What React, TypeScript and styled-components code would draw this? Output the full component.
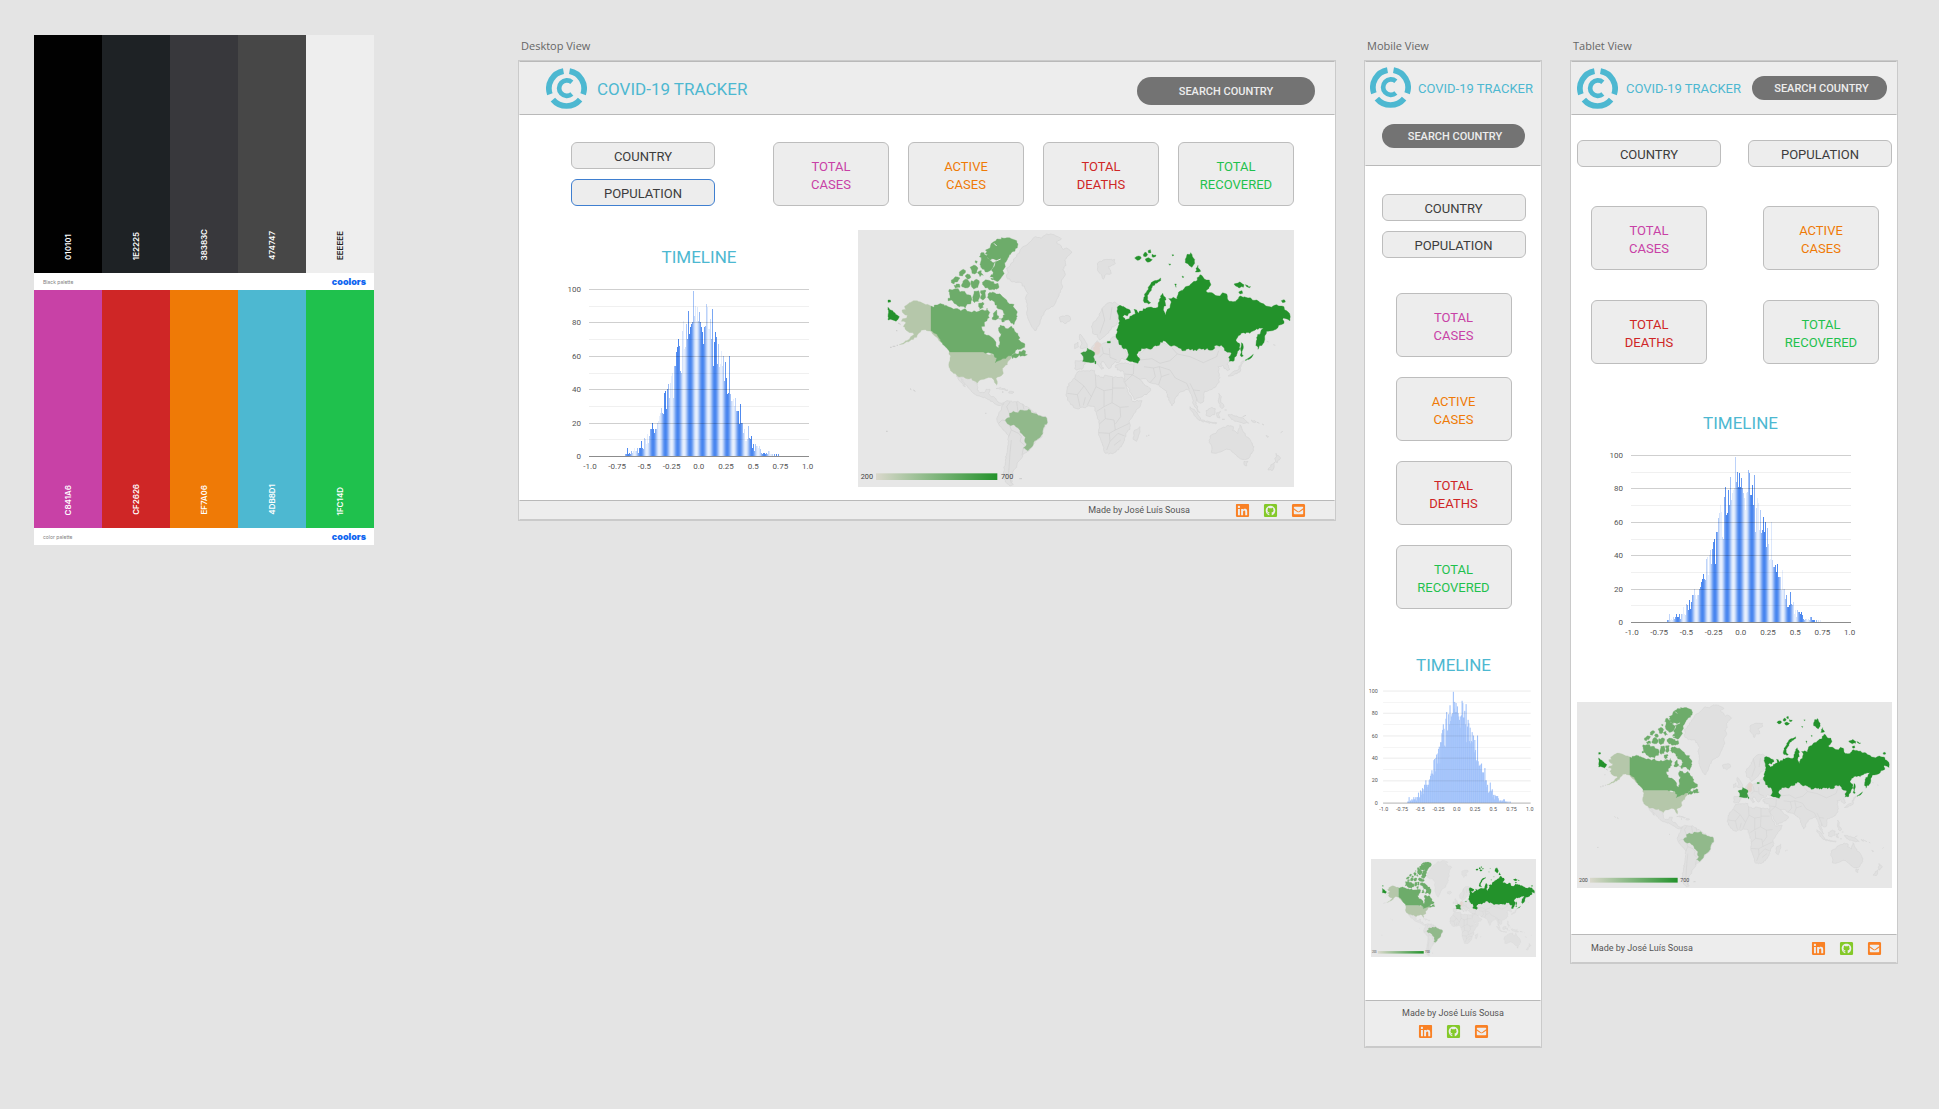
import React from "react";
import styled, { createGlobalStyle } from "styled-components";
import { FaEnvelopeSquare, FaGithubSquare, FaLinkedin } from "react-icons/fa";

type View = "desktop" | "mobile" | "tablet";

const color = {
  canvas: "#e4e4e4",
  panel: "#ededed",
  line: "#b9b9b9",
  edge: "#cacaca",
  teal: "#4db8d1",
  pink: "#c841a6",
  red: "#cf2626",
  orange: "#ef7a06",
  green: "#1fc14d",
};

const GlobalStyle = createGlobalStyle`
  * { box-sizing: border-box; }
  body {
    margin: 0;
    background: ${color.canvas};
    font-family: Roboto, "Liberation Sans", sans-serif;
  }
  h2, h3, p, figure { margin: 0; font-weight: 400; }
`;

/* ---------- canvas ---------- */

const Canvas = styled.main`
  display: flex;
  align-items: flex-start;
  gap: 144px;
  min-height: 100vh;
  padding: 35px 41px 35px 34px;
`;

const Boards = styled.div`
  flex: 1;
  min-width: 0;
  display: grid;
  grid-template-columns: 818fr 178fr 328fr;
  align-items: start;
  gap: 28px;
`;

const BoardLabel = styled.h2`
  height: 25px;
  padding-left: 3px;
  font: 400 11px/22px "Open Sans", "Noto Sans", sans-serif;
  color: #666;
`;

const Board = styled.section`
  border: 1px solid ${color.edge};
  background: #fff;
`;

/* ---------- palettes ---------- */

const Palettes = styled.aside`
  flex: 0 0 340px;
`;

const Swatches = styled.div`
  display: grid;
  grid-template-columns: repeat(5, 1fr);
  height: 238px;
`;

const Swatch = styled.div<{ $fill: string; $dark?: boolean }>`
  display: flex;
  align-items: flex-end;
  justify-content: center;
  padding-bottom: 13px;
  background: ${(p) => p.$fill};
  color: ${(p) => (p.$dark ? "#222" : "#fff")};
`;

const Code = styled.span`
  writing-mode: vertical-rl;
  transform: rotate(180deg);
  font: 600 8px/10px Inter, sans-serif;
`;

const PaletteFooter = styled.div`
  display: flex;
  align-items: center;
  justify-content: space-between;
  height: 17px;
  padding: 0 8px 0 9px;
  background: #fff;
`;

const PaletteName = styled.span`
  font: 400 5px/8px Inter, sans-serif;
  color: #808080;
`;

const Coolors = styled.span`
  font: 900 9px/12px Inter, sans-serif;
  color: #0f66f0;
`;

const palettes = [
  { name: "Black palette", codes: ["010101", "1E2225", "38383C", "474747", "EEEEEE"] },
  { name: "color palette", codes: ["C841A6", "CF2626", "EF7A06", "4DB8D1", "1FC14D"] },
];

/* ---------- header ---------- */

const headerPadding = { desktop: "0 19px 0 26px", mobile: "5px 4px 17px 4px", tablet: "0 9px 0 5px" };
const brandGap = { desktop: 10, mobile: 7, tablet: 8 };

const Header = styled.header<{ $view: View }>`
  display: flex;
  flex-direction: ${(p) => (p.$view === "mobile" ? "column" : "row")};
  align-items: center;
  justify-content: space-between;
  gap: ${(p) => (p.$view === "mobile" ? "16px" : "0")};
  min-height: 54px;
  padding: ${(p) => headerPadding[p.$view]};
  border: 1px solid;
  border-color: ${color.line} transparent;
  background: ${color.panel};
`;

const Brand = styled.div<{ $view: View }>`
  display: flex;
  align-items: center;
  align-self: ${(p) => (p.$view === "mobile" ? "flex-start" : "auto")};
  gap: ${(p) => brandGap[p.$view]}px;
  font-size: ${(p) => (p.$view === "desktop" ? "17px" : "13px")};
  line-height: 20px;
  white-space: nowrap;
  color: ${color.teal};
`;

const BrandName = styled.span`
  padding-top: 2px;
`;

const LogoSvg = styled.svg`
  display: block;
  width: 41px;
  height: 41px;
`;

const SearchForm = styled.form<{ $view: View }>`
  width: ${(p) => ({ desktop: 178, mobile: 143, tablet: 135 })[p.$view]}px;
  padding-top: ${(p) => (p.$view === "desktop" ? "6px" : "0")};
`;

const SearchInput = styled.input<{ $view: View }>`
  display: block;
  width: 100%;
  height: ${(p) => (p.$view === "desktop" ? "28px" : "24px")};
  padding: ${(p) => (p.$view === "desktop" ? "0 8px" : "0 8px 0 12px")};
  border: 0;
  border-radius: 14px;
  background: #737373;
  font: 500 11px/16px Roboto, sans-serif;
  text-align: center;
  color: #ededed;
  &::placeholder { color: #ededed; opacity: 1; }
`;

const Logo = () => (
  <LogoSvg viewBox="0 0 122 122" fill="none" stroke={color.teal} aria-hidden="true">
    <path strokeWidth="17" d="M52 9.300A52.500 52.500 0 0 0 11.500 78" />
    <path strokeWidth="17" d="M70 9.300A52.500 52.500 0 0 1 110.500 78" />
    <path strokeWidth="17" d="M20.500 94A52.500 52.500 0 0 0 101.500 94" />
    <path strokeWidth="14" d="M77 42.500A23 23 0 1 0 77 77.500" />
  </LogoSvg>
);

/* ---------- controls and totals ---------- */

const Controls = styled.div<{ $row?: boolean }>`
  display: flex;
  flex-direction: ${(p) => (p.$row ? "row" : "column")};
  justify-content: space-between;
  align-self: ${(p) => (p.$row ? "stretch" : "auto")};
  gap: 10px;
`;

const Choice = styled.button<{ $active?: boolean }>`
  width: 144px;
  height: 27px;
  padding: 3px 0 0;
  border: 1px solid ${(p) => (p.$active ? "#3f7fd0" : "#bdbdbd")};
  border-radius: 6px;
  background: ${color.panel};
  font: 400 13px/18px Roboto, sans-serif;
  color: #3c3c3c;
`;

const Totals = styled.div<{ $view: View }>`
  flex: ${(p) => (p.$view === "tablet" ? "1" : "0 1 auto")};
  display: grid;
  grid-template-columns: repeat(${(p) => ({ desktop: 4, mobile: 1, tablet: 2 })[p.$view]}, 116px);
  justify-content: space-between;
  gap: ${(p) => ({ desktop: "19px", mobile: "20px", tablet: "30px" })[p.$view]};
  padding: ${(p) => (p.$view === "tablet" ? "0 13px 0 14px" : "0")};
`;

const Total = styled.div<{ $tone: string }>`
  display: flex;
  flex-direction: column;
  align-items: center;
  justify-content: center;
  height: 64px;
  padding-top: 3px;
  border: 1px solid #bdbdbd;
  border-radius: 6px;
  background: ${color.panel};
  font-size: 13px;
  line-height: 18px;
  color: ${(p) => p.$tone};
`;

const totals: [string, string, string][] = [
  ["TOTAL", "CASES", color.pink],
  ["ACTIVE", "CASES", color.orange],
  ["TOTAL", "DEATHS", color.red],
  ["TOTAL", "RECOVERED", color.green],
];

/* ---------- body layouts ---------- */

const DesktopBody = styled.div`
  display: grid;
  gap: 24px;
  padding: 27px 41px 13px 52px;
`;

const SplitRow = styled.div`
  display: flex;
  align-items: flex-start;
  justify-content: space-between;
`;

const TimelineSlot = styled.div`
  flex: 0 1 256px;
  padding-top: 15px;
`;

const MapSlot = styled.div`
  flex: 0 1 436px;
`;

const MobileBody = styled.div`
  display: flex;
  flex-direction: column;
  align-items: center;
  padding: 28px 5px 43px 6px;
`;

const TabletBody = styled.div`
  display: flex;
  flex-direction: column;
  align-items: center;
  padding: 25px 5px 46px 6px;
`;

const Section = styled.div<{ $top: number; $inset?: number }>`
  align-self: stretch;
  display: flex;
  justify-content: center;
  margin-top: ${(p) => p.$top}px;
  padding-left: ${(p) => p.$inset || 0}px;
`;

/* ---------- timeline chart ---------- */

const Figure = styled.figure<{ $fluid?: boolean }>`
  width: ${(p) => (p.$fluid ? "100%" : "256px")};
`;

const ChartTitle = styled.h3<{ $fluid?: boolean }>`
  margin-bottom: ${(p) => (p.$fluid ? "9px" : "13px")};
  font-size: 17px;
  line-height: 24px;
  text-align: center;
  color: ${color.teal};
`;

const ChartSvg = styled.svg<{ $fluid?: boolean }>`
  display: block;
  width: calc(100% - ${(p) => (p.$fluid ? 4 : 16)}px);
  overflow: visible;
  font: 8px Roboto, sans-serif;
  fill: #555;
`;

const samples = [
  1, 1, 5, 1, 2, 1, 3, 2, 3, 5, 3, 3, 5, 2, 5, 5, 9, 5, 4, 11, 10, 7, 13, 8, 12, 16, 16, 20, 16, 14, 16, 16, 20, 21,
  24, 26, 29, 26, 25, 38, 39, 28, 40, 43, 35, 44, 48, 50, 35, 54, 54, 62, 65, 70, 66, 51, 50, 75, 81, 64, 65, 79, 70,
  87, 73, 77, 79, 80, 99, 84, 90, 81, 89, 81, 86, 80, 77, 74, 67, 77, 78, 91, 89, 76, 76, 82, 70, 88, 54, 68, 74, 71,
  55, 67, 53, 55, 63, 54, 60, 45, 56, 47, 37, 38, 60, 37, 33, 33, 34, 30, 35, 27, 27, 27, 19, 31, 20, 20, 14, 16, 9, 9,
  10, 18, 11, 10, 12, 5, 7, 3, 7, 6, 6, 5, 6, 4, 2, 1, 2, 2, 1, 2, 1, 3, 3, 1, 1, 1, 0, 1, 0, 1, 0, 1,
];
const FIRST = -74;
const BEAT = 12.36;

const Timeline = ({ phase = 0, fluid }: { phase?: number; fluid?: boolean }) => (
  <Figure $fluid={fluid}>
    <ChartTitle $fluid={fluid}>TIMELINE</ChartTitle>
    <ChartSvg $fluid={fluid} viewBox="0 0 240 190" role="img" aria-label="Timeline">
      <g shapeRendering={fluid ? "auto" : "crispEdges"}>
        {samples.map((v, i) => {
          const x = FIRST + i;
          const wave = 0.5 + 0.5 * Math.cos((2 * Math.PI * (x - phase)) / BEAT);
          return (
            <rect
              key={i}
              x={128 + x}
              y={174 - v * 1.67}
              width={fluid ? 1.6 : 1}
              height={v * 1.67}
              fill={fluid ? "#a1c2fa" : "#4080ee"}
              opacity={fluid ? 1 : 0.12 + 0.84 * wave}
            />
          );
        })}
        {Array.from({ length: 11 }, (_, i) => (
          <rect
            key={i}
            x={18}
            y={Math.round(174 - i * 16.7)}
            width={220}
            height={1}
            fill="#000"
            opacity={i === 0 ? 0.45 : i % 2 ? 0.06 : fluid ? 0.12 : 0.19}
          />
        ))}
      </g>
      {[0, 20, 40, 60, 80, 100].map((v) => (
        <text key={v} x={10} y={177 - v * 1.67} textAnchor="end">
          {v}
        </text>
      ))}
      {["-1.0", "-0.75", "-0.5", "-0.25", "0.0", "0.25", "0.5", "0.75", "1.0"].map((t, i) => (
        <text key={t} x={19 + i * 27.2} y={187} textAnchor="middle">
          {t}
        </text>
      ))}
    </ChartSvg>
  </Figure>
);

/* ---------- world map ---------- */

const MapSvg = styled.svg`
  display: block;
  width: 100%;
  background: #e7e7e7;
  font: 22px Roboto, sans-serif;
  fill: #444;
`;

const noise = (n: number) => {
  const s = Math.sin(n * 12.9898) * 43758.5453;
  return s - Math.floor(s) - 0.5;
};

/* Turns a coarse outline into a ragged coast; long straight borders stay straight. */
const coast = (outline: string, rough: number) => {
  const pts = outline.split(" ").map((p) => p.split(",").map(Number));
  const out: string[] = [];
  pts.forEach(([x, y], i) => {
    const [u, v] = pts[(i + 1) % pts.length];
    out.push(`${x},${y}`);
    const len = Math.hypot(u - x, v - y);
    if (len > 40 && (x === u || y === v)) return;
    const steps = Math.floor(len / 5);
    for (let k = 1; k < steps; k++) {
      const t = k / steps;
      const a = noise(x + y * 3 + k * 7) * rough;
      const b = noise(x * 2 + y + k * 11) * rough;
      out.push(`${(x + (u - x) * t + a).toFixed(1)},${(y + (v - y) * t + b).toFixed(1)}`);
    }
  });
  return out.join(" ");
};

const west = {
  neutral: [
    "540,66 556,50 576,54 590,42 612,44 634,56 620,66 634,78 640,88 650,84 666,96 654,108 644,120 648,136 638,150 646,164 634,184 638,200 632,216 624,232 616,250 608,260 588,268 574,290 568,314 558,332 546,322 536,300 530,276 532,252 526,236 534,220 524,204 512,188 486,186 470,172 474,156 470,144 486,128 500,110 512,88",
    "628,292 638,288 658,288 662,300 648,310 632,306",
    "318,468 340,471 352,477 364,475 374,484 382,492 382,508 390,518 402,518 408,508 420,508 416,520 424,530 436,534 444,546 454,550 462,548 460,556 444,556 432,550 420,540 404,532 388,528 368,518 358,506 344,490 334,476 346,500 340,498 328,482",
    "438,506 452,502 474,510 470,512 454,508",
    "478,514 492,516 488,520 476,519",
    "462,548 472,542 488,546 504,544 518,552 532,560 544,570 560,582 590,592 592,608 582,626 576,650 560,660 548,678 538,692 528,698 518,706 512,718 502,728 500,742 490,752 488,768 482,778 490,794 480,798 466,786 460,760 466,720 472,690 476,650 462,632 446,612 440,596 446,582 454,570 456,556",
    "674,372 684,366 686,380 674,386",
    "690,342 698,352 708,368 712,380 698,386 690,384 696,372 688,358",
    "676,422 704,424 706,432 696,448 680,450 674,446",
  ],
  canada: [
    "243,258 252,262 262,255 275,252 284,258 300,262 312,268 330,270 345,266 352,274 372,272 380,276 392,270 404,272 412,264 418,280 412,296 404,306 396,328 402,342 416,346 428,354 436,364 440,380 446,384 448,362 452,348 446,332 450,316 462,318 474,326 486,320 494,334 504,346 510,362 522,370 524,382 512,388 496,392 486,404 470,412 452,420 436,428 440,414 430,402 412,398 400,396 298,396 284,378 272,364 262,346 250,336 243,332",
    "484,408 494,400 506,402 520,390 532,404 524,408 508,404 498,414 488,416",
    "414,222 428,216 446,222 460,232 470,240 486,252 498,270 502,288 494,306 492,314 480,304 470,300 456,306 446,296 460,292 466,282 452,268 440,262 434,246 420,242 412,232",
    "430,280 440,270 446,288 436,300 426,294",
    "298,208 316,206 330,216 346,218 362,226 366,238 358,252 346,264 326,258 312,250 304,240 294,242 300,228",
    "372,214 386,212 390,228 386,244 374,248 368,232",
    "392,212 408,212 406,226 398,240 392,230",
    "386,250 398,246 400,262 388,268",
    "424,70 440,58 462,55 484,56 500,62 504,72 496,86 484,98 476,112 464,128 466,140 458,152 460,164 450,178 440,184 426,180 420,172 430,158 424,150 434,138 438,120 428,116 418,118 406,102 412,88 420,84",
    "392,100 402,98 412,114 424,124 434,126 430,138 420,152 406,156 398,148 390,134 394,120 388,110",
    "402,184 420,182 444,190 446,204 426,208 406,204 398,194",
    "364,182 380,178 388,188 384,202 368,204",
    "338,186 352,178 360,188 358,200 342,202 334,196",
    "304,180 316,170 330,174 322,186 312,192 304,188",
    "328,156 340,148 346,158 338,168 328,166",
    "360,142 370,136 384,144 380,158 366,160",
    "384,156 394,152 400,166 390,170",
    "345,168 359,164 363,172 351,176",
    "376,122 382,124 380,130 375,127",
    "312,196 328,192 330,202 316,204",
  ],
  usa: [
    "243,258 228,254 212,246 194,242 178,248 164,258 168,268 156,270 160,280 172,286 170,294 158,296 154,304 168,308 160,320 170,332 184,338 192,344 180,354 164,366 148,374 160,372 180,362 200,352 206,340 218,330 230,332 243,334",
    "243,328 258,336 270,350 278,366 274,368 260,352 246,340",
    "298,396 404,396 414,404 424,402 438,410 436,424 450,420 466,412 478,404 484,414 474,424 472,434 462,442 458,452 460,460 448,470 438,476 442,490 440,496 434,488 428,476 412,474 402,478 390,480 382,490 372,482 364,474 352,476 340,470 322,468 310,460 300,446 297,428 300,414",
  ],
  brazil: [
    "478,580 490,574 504,578 510,570 524,572 536,568 544,578 560,582 590,594 592,608 580,624 578,642 568,654 554,662 546,680 534,692 520,684 530,672 524,664 526,652 514,640 506,626 494,616 478,614 466,602 472,594 480,592",
  ],
  france: ["692,400 706,396 712,384 722,390 734,398 730,410 734,422 722,428 708,426 698,424 700,410"],
  russia: ["114,262 130,276 148,290 138,304 122,298 114,300", "114,240 121,240 122,246 114,247"],
};

const east = {
  neutral: [
    "8,340 4,318 14,304 28,288 36,266 52,250 74,246 88,256 82,268 84,300 80,314 66,320 62,330 50,342 38,352 28,360 22,344",
    "0,392 14,372 22,362 30,372 56,366 66,352 76,348 82,358 100,380 112,400 108,420 96,414 86,428 76,424 70,432 56,446 48,436 36,424 30,432 42,444 34,448 18,426 4,422",
    "76,436 100,430 132,432 150,420 148,400 170,384 210,366 250,378 300,392 360,386 396,378 420,396 424,420 410,432 420,448 412,452 398,436 384,440 388,462 388,486 376,502 358,510 344,514 342,530 340,546 328,548 320,536 316,546 322,566 330,578 322,574 312,556 306,530 298,512 288,508 270,516 258,530 252,550 246,558 236,540 230,514 218,506 206,494 180,488 172,480 160,476 150,478 164,494 182,506 178,516 150,532 134,540 124,520 104,486 102,462 98,452 82,450",
    "-70,518 -68,500 -50,476 -38,456 -20,452 4,450 14,452 16,464 40,474 44,466 70,472 98,472 102,486 116,520 128,544 156,542 150,560 130,584 118,602 120,628 108,640 104,660 94,680 78,696 56,702 46,700 38,676 26,640 28,612 20,584 14,560 -10,560 -40,566 -58,554 -70,530",
    "134,630 150,620 150,636 140,664 130,658",
    "358,664 360,648 378,640 392,626 406,622 414,616 430,620 428,632 444,640 450,614 458,632 466,648 482,662 492,680 486,700 474,716 456,718 442,710 430,698 414,688 396,694 378,700 364,698 366,684",
    "462,724 474,724 470,738 464,736",
    "558,700 572,714 562,728 556,720",
    "556,726 546,752 534,750 548,732",
    "300,560 316,574 332,594 330,602 316,590 304,572",
    "332,600 360,606 380,608 378,612 340,606",
    "348,572 366,562 376,566 374,584 360,590 348,586",
    "380,578 392,574 386,584 390,594 382,592",
    "414,584 440,588 462,596 476,610 456,608 440,604 424,598",
    "386,520 394,530 392,548 402,560 396,566 386,548",
    "456,424 464,422 454,436 450,456 430,466 414,468 428,456 444,450",
    "22,130 40,120 74,118 76,130 56,140 64,160 50,162 40,178 30,160 22,148",
    "484,600 498,606 494,608",
    "528,646 536,650 532,652",
  ],
  germany: ["14,372 22,366 32,372 30,392 24,404 14,402 10,388"],
  russia: [
    "82,262 90,256 104,262 120,270 122,278 112,288 104,284 98,290 106,300 118,296 124,288 136,282 132,268 140,270 146,280 160,266 176,262 190,264 204,262 208,238 218,220 226,232 226,250 220,270 228,286 232,268 240,264 244,246 236,236 250,232 262,236 266,216 282,206 300,194 318,184 330,164 344,178 358,180 362,196 348,214 366,218 376,226 390,228 398,218 410,222 414,240 424,244 440,240 452,228 474,234 500,240 516,250 540,260 560,254 576,258 590,272 600,286 600,302 588,296 578,298 582,310 566,316 552,330 530,334 524,350 518,372 504,388 498,374 500,352 512,336 520,324 500,326 480,340 460,338 444,348 438,362 448,370 450,386 440,404 430,424 418,424 416,412 424,400 404,392 394,376 380,376 368,390 340,386 310,392 296,386 276,392 262,380 238,376 226,364 210,366 208,376 190,380 182,388 160,386 146,394 140,404 148,414 144,430 130,426 108,418 116,404 112,390 96,382 86,366 78,352 80,330 88,312 86,296",
    "160,242 168,218 178,198 190,184 212,174 212,182 196,190 184,206 176,222 172,238 182,248 176,252",
    "290,108 302,98 310,114 314,130 306,142 296,134 286,128",
    "318,144 324,136 332,154 316,156",
    "432,192 448,186 462,194 460,202 444,202",
    "466,194 482,200 470,200",
    "446,216 456,212 458,220 450,222",
    "574,242 584,240 586,246 578,248",
    "454,368 460,380 456,394 460,408 454,410 452,390",
    "466,420 490,403 488,407 468,422",
    "52,364 61,364 61,369 52,369",
    "134,114 146,108 154,114 148,120 138,118",
    "160,104 168,97 173,104 168,110 161,109",
    "174,92 181,89 183,98 176,99",
    "166,117 176,113 187,119 180,125 168,123",
    "186,103 198,105 196,110 186,109",
    "276,168 281,170 279,174",
    "254,192 259,192 258,202",
    "246,104 252,105 248,108",
    "236,132 242,132 240,136",
    "14,424 18,424 17,432 15,432",
  ],
};

const borders =
  "M-46 476L-18 498 -38 524M-18 498L4 530 M16 464L18 500 4 530 -8 556M18 500L42 512 42 560M68 472V504L104 504M68 504L66 548 90 562 116 560M42 512L66 508M-68 520L-38 524 -30 560M-20 556L-14 532M66 548L42 560 20 574M44 566L46 596 28 612M46 596L72 600 76 630 118 610M90 562L92 590 76 612M26 638L58 640 60 664 50 690M60 664L84 640 104 648M58 640L76 630M72 676L92 660M104 486L130 462 132 434M104 462L126 464 150 478M162 440L190 444 208 440 240 450M150 420L186 416 210 430 240 422M190 444L196 470 180 488M208 440L214 470 206 494M240 450L256 474 290 490 298 508M214 470L238 462M240 422L262 402 300 410 340 428 380 410 386 392M262 402L246 384M300 490L310 510 330 512M310 510L320 536M36 380L40 400 58 404M40 400L28 412M58 384L60 412 80 420M36 266L44 300 30 340M66 262L60 300";

const southBorders =
  "M478 580L470 560 480 546M500 546L504 576M518 552L522 568M466 602L456 600 446 610M478 614L484 630 476 650M484 630L506 640 514 650M484 660L480 700 476 760 484 790M514 650L510 664 524 676M520 684L516 706";

type ShapeProps = { shapes: string[]; fill: string; stroke?: string; rough?: number };
const Shapes = ({ shapes, fill, stroke, rough = 5 }: ShapeProps) => (
  <g fill={fill} stroke={stroke || fill} strokeWidth={stroke ? 2 : 1}>
    {shapes.map((s) => (
      <polygon key={s} points={coast(s, rough)} />
    ))}
  </g>
);

const WorldMap = ({ id }: { id: string }) => (
  <MapSvg viewBox="0 0 1308 771" role="img" aria-label="Cases by country">
    <defs>
      <linearGradient id={id}>
        <stop offset="0" stopColor="#dad8cc" />
        <stop offset="1" stopColor="#23922b" />
      </linearGradient>
    </defs>
    <g transform="translate(-24 -30)">
      <Shapes shapes={west.neutral} fill="#e0e0e0" stroke="#d4d4d4" />
      <path d={southBorders} fill="none" stroke="#d0d0d0" strokeWidth="2" />
      <Shapes shapes={west.usa} fill="#b5c7aa" />
      <Shapes shapes={west.canada} fill="#6dac6a" rough={8} />
      <Shapes shapes={west.brazil} fill="#91b98b" />
      <Shapes shapes={west.russia} fill="#23922b" />
      <path
        d="M424 118l14 5 14-6M420 172l10 2M432 70l8 8"
        stroke="#e7e7e7"
        strokeWidth="3"
        fill="none"
      />
      <path
        d="M120 382h5M128 379h8M140 376h4M180 506l4 3M190 510l6 4M108 634h5M138 332h4M144 309l8 4M406 580h3M456 516h4M508 776h8"
        stroke="#bdbdbd"
        strokeWidth="2"
      />
    </g>
    <g transform="translate(696 -30)">
      <Shapes shapes={east.neutral} fill="#e0e0e0" stroke="#d4d4d4" />
      <path d={borders} fill="none" stroke="#d0d0d0" strokeWidth="2" />
      <Shapes shapes={east.germany} fill="#e3d5d0" />
      <Shapes shapes={east.russia} fill="#23922b" rough={6} />
      <path
        d="M500 606l8 4M516 612l6 3M572 638l6-4M530 364l6 2M550 374l6 2M168 648h4M174 646h4M404 570h6M396 598h8M458 590l10-4"
        stroke="#cccccc"
        strokeWidth="2"
      />
    </g>
    <g transform="translate(-24 -30)">
      <Shapes shapes={west.france} fill="#3c9a41" />
    </g>
    <rect x="54" y="730" width="364" height="20" fill={`url(#${id})`} />
    <text x="8" y="747">200</text>
    <text x="429" y="747">700</text>
  </MapSvg>
);

/* ---------- footer ---------- */

const footerPadding = { desktop: "0 28px", mobile: "6px 0 7px", tablet: "0 14px 0 19px" };
const footerHeight = { desktop: 20, mobile: 47, tablet: 29 };

const Footer = styled.footer<{ $view: View }>`
  display: flex;
  flex-direction: ${(p) => (p.$view === "mobile" ? "column" : "row")};
  align-items: center;
  justify-content: ${(p) => (p.$view === "desktop" ? "flex-end" : "space-between")};
  gap: ${(p) => (p.$view === "desktop" ? "45px" : "0")};
  height: ${(p) => footerHeight[p.$view]}px;
  padding: ${(p) => footerPadding[p.$view]};
  border: 1px solid;
  border-color: ${color.line} transparent ${color.edge};
  background: ${color.panel};
  font-size: 9px;
  line-height: 12px;
  color: #555;
`;

const Links = styled.nav`
  display: flex;
  gap: 13px;
`;

const IconLink = styled.a<{ $tone: string }>`
  display: block;
  height: 15px;
  font-size: 15px;
  line-height: 0;
  color: ${(p) => p.$tone};
`;

/* ---------- composed parts ---------- */

const TopBar = ({ view }: { view: View }) => (
  <Header $view={view}>
    <Brand $view={view}>
      <Logo />
      <BrandName>COVID-19 TRACKER</BrandName>
    </Brand>
    <SearchForm $view={view}>
      <SearchInput $view={view} type="text" aria-label="Search country" placeholder="SEARCH COUNTRY" />
    </SearchForm>
  </Header>
);

const Choices = ({ row, active }: { row?: boolean; active?: boolean }) => (
  <Controls $row={row}>
    <Choice type="button">COUNTRY</Choice>
    <Choice type="button" $active={active}>
      POPULATION
    </Choice>
  </Controls>
);

const TotalCards = ({ view }: { view: View }) => (
  <Totals $view={view}>
    {totals.map(([first, second, tone]) => (
      <Total key={first + second} $tone={tone}>
        <span>{first}</span>
        <span>{second}</span>
      </Total>
    ))}
  </Totals>
);

const Credits = ({ view }: { view: View }) => (
  <Footer $view={view}>
    <p>Made by José Luís Sousa</p>
    <Links>
      <IconLink href="#linkedin" aria-label="LinkedIn" $tone="#f98125">
        <FaLinkedin />
      </IconLink>
      <IconLink href="#github" aria-label="GitHub" $tone="#84c929">
        <FaGithubSquare />
      </IconLink>
      <IconLink href="#mail" aria-label="Email" $tone="#f98125">
        <FaEnvelopeSquare />
      </IconLink>
    </Links>
  </Footer>
);

export default function App() {
  return (
    <>
      <GlobalStyle />
      <Canvas>
        <Palettes>
          {palettes.map((p) => (
            <div key={p.name}>
              <Swatches>
                {p.codes.map((c) => (
                  <Swatch key={c} $fill={`#${c}`} $dark={c === "EEEEEE"}>
                    <Code>{c}</Code>
                  </Swatch>
                ))}
              </Swatches>
              <PaletteFooter>
                <PaletteName>{p.name}</PaletteName>
                <Coolors>coolors</Coolors>
              </PaletteFooter>
            </div>
          ))}
        </Palettes>
        <Boards>
          <div>
            <BoardLabel>Desktop View</BoardLabel>
            <Board>
              <TopBar view="desktop" />
              <DesktopBody>
                <SplitRow>
                  <Choices active />
                  <TotalCards view="desktop" />
                </SplitRow>
                <SplitRow>
                  <TimelineSlot>
                    <Timeline phase={3} />
                  </TimelineSlot>
                  <MapSlot>
                    <WorldMap id="scale-desktop" />
                  </MapSlot>
                </SplitRow>
              </DesktopBody>
              <Credits view="desktop" />
            </Board>
          </div>
          <div>
            <BoardLabel>Mobile View</BoardLabel>
            <Board>
              <TopBar view="mobile" />
              <MobileBody>
                <Choices />
                <Section $top={35}>
                  <TotalCards view="mobile" />
                </Section>
                <Section $top={44}>
                  <Timeline fluid />
                </Section>
                <Section $top={46}>
                  <WorldMap id="scale-mobile" />
                </Section>
              </MobileBody>
              <Credits view="mobile" />
            </Board>
          </div>
          <div>
            <BoardLabel>Tablet View</BoardLabel>
            <Board>
              <TopBar view="tablet" />
              <TabletBody>
                <Choices row />
                <Section $top={39}>
                  <TotalCards view="tablet" />
                </Section>
                <Section $top={47} $inset={12}>
                  <Timeline phase={-2} />
                </Section>
                <Section $top={64}>
                  <WorldMap id="scale-tablet" />
                </Section>
              </TabletBody>
              <Credits view="tablet" />
            </Board>
          </div>
        </Boards>
      </Canvas>
    </>
  );
}
